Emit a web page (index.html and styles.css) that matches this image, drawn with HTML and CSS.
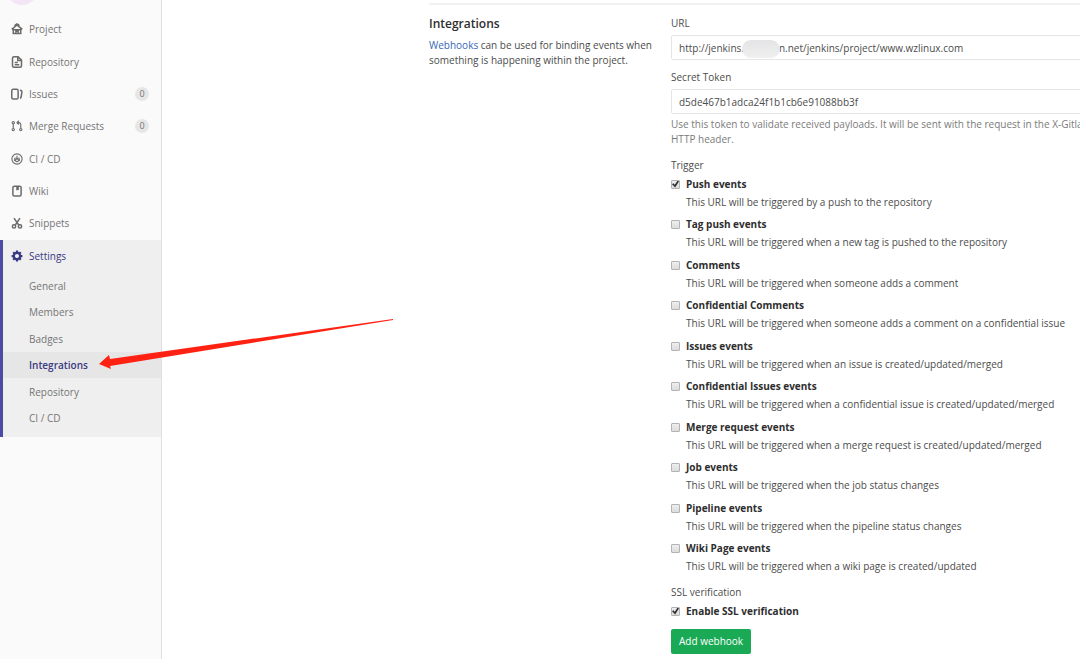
FILE: index.html
```html
<!DOCTYPE html>
<html lang="en">
<head>
	<meta charset="UTF-8">
	<meta name="viewport" content="width=device-width, initial-scale=1.0">
	<title>Integrations</title>
	<link rel="stylesheet" href="styles.css">
</head>
<body>

	<div class="page">

		<!-- Sidebar -->
		<nav class="sidebar">
			<div class="avatar"></div>
			<ul class="nav-list">
				<li><a href="#">
					<svg class="icon" viewBox="0 0 16 16"><path d="M1 8.500 8 2.500l7 6M3 7.500V14h10V7.500M3 9h10M6.500 14v-3h3v3M5.500 4.500V2.800L8 1.200l2.500 1.600v1.700"/></svg>
					<span>Project</span></a></li>
				<li><a href="#">
					<svg class="icon" viewBox="0 0 16 16"><path d="M4 1h5.500L14 5.500V13a2 2 0 0 1-2 2H4a2 2 0 0 1-2-2V3a2 2 0 0 1 2-2zM9 1.500V6h4.500M5 8.500h4M5 11.500h6"/></svg>
					<span>Repository</span></a></li>
				<li><a href="#">
					<svg class="icon" viewBox="0 0 16 16"><rect x="1" y="1.500" width="8.500" height="13" rx="2"/><path d="M12 3c2 .3 2.800 1 2.500 2.800L13.500 12c-.2 1-.7 1.500-1.500 1.700"/></svg>
					<span>Issues</span><span class="badge">0</span></a></li>
				<li><a href="#">
					<svg class="icon thin" viewBox="0 0 16 16"><path d="M3 5v6M13 11V6a2.500 2.500 0 0 0-2.500-2.500H8M10.500 1 8 3.500 10.500 6"/><circle cx="3" cy="3.500" r="1.500"/><circle cx="3" cy="12.800" r="1.500"/><circle cx="13" cy="12.800" r="1.500"/></svg>
					<span>Merge Requests</span><span class="badge">0</span></a></li>
				<li><a href="#">
					<svg class="icon thin" viewBox="0 0 16 16"><circle cx="8" cy="8" r="6.800"/><circle cx="8" cy="9.500" r="2"/><path d="M8 3.500V9M5.500 6 4.500 10.500M10.500 6l1 4.500"/></svg>
					<span>CI / CD</span></a></li>
				<li><a href="#">
					<svg class="icon" viewBox="0 0 16 16"><rect x="2.500" y="1.500" width="11" height="13" rx="2"/><path d="M8 2v5M9.500 2v4.500"/></svg>
					<span>Wiki</span></a></li>
				<li><a href="#">
					<svg class="icon" viewBox="0 0 16 16"><path d="M4 1.500 10.500 11M12 1.500 5.500 11"/><circle cx="4" cy="12.500" r="2.200"/><circle cx="12" cy="12.500" r="2.200"/></svg>
					<span>Snippets</span></a></li>
				<li class="active"><a href="#">
					<svg class="icon gear" viewBox="0 0 16 16"><circle cx="8" cy="8" r="4.200"/><path d="M8 .8v3M8 12.200v3M.8 8h3M12.200 8h3M2.900 2.900l2.200 2.200M10.900 10.900l2.200 2.200M2.900 13.100l2.200-2.200M10.900 5.100l2.200-2.200"/></svg>
					<span>Settings</span></a>
					<ul class="sub-list">
						<li><a href="#">General</a></li>
						<li><a href="#">Members</a></li>
						<li><a href="#">Badges</a></li>
						<li class="current"><a href="#">Integrations</a></li>
						<li><a href="#">Repository</a></li>
						<li><a href="#">CI / CD</a></li>
					</ul>
				</li>
			</ul>
		</nav>

		<!-- Content -->
		<main class="content">
			<div class="settings-row">
				<section class="intro">
					<h1>Integrations</h1>
					<p><a href="#">Webhooks</a> can be used for binding events when something is happening within the project.</p>
				</section>

				<form class="hook-form">
					<label class="field-label" for="url">URL</label>
					<div class="url-field">
						<input type="text" id="url" value="http://jenkins.&emsp;&emsp;&emsp;&ensp;n.net/jenkins/project/www.wzlinux.com">
						<span class="mask"></span>
					</div>

					<label class="field-label" for="token">Secret Token</label>
					<input type="text" id="token" value="d5de467b1adca24f1b1cb6e91088bb3f">
					<p class="help">Use this token to validate received payloads. It will be sent with the request in the X-Gitlab<br>HTTP header.</p>

					<h2>Trigger</h2>
					<ul class="triggers">
						<li><input type="checkbox" id="push" checked><label for="push">Push events</label>
							<p>This URL will be triggered by a push to the repository</p></li>
						<li><input type="checkbox" id="tag"><label for="tag">Tag push events</label>
							<p>This URL will be triggered when a new tag is pushed to the repository</p></li>
						<li><input type="checkbox" id="comments"><label for="comments">Comments</label>
							<p>This URL will be triggered when someone adds a comment</p></li>
						<li><input type="checkbox" id="conf-comments"><label for="conf-comments">Confidential Comments</label>
							<p>This URL will be triggered when someone adds a comment on a confidential issue</p></li>
						<li><input type="checkbox" id="issues"><label for="issues">Issues events</label>
							<p>This URL will be triggered when an issue is created/updated/merged</p></li>
						<li><input type="checkbox" id="conf-issues"><label for="conf-issues">Confidential Issues events</label>
							<p>This URL will be triggered when a confidential issue is created/updated/merged</p></li>
						<li><input type="checkbox" id="merge"><label for="merge">Merge request events</label>
							<p>This URL will be triggered when a merge request is created/updated/merged</p></li>
						<li><input type="checkbox" id="job"><label for="job">Job events</label>
							<p>This URL will be triggered when the job status changes</p></li>
						<li><input type="checkbox" id="pipeline"><label for="pipeline">Pipeline events</label>
							<p>This URL will be triggered when the pipeline status changes</p></li>
						<li><input type="checkbox" id="wiki"><label for="wiki">Wiki Page events</label>
							<p>This URL will be triggered when a wiki page is created/updated</p></li>
					</ul>

					<h2>SSL verification</h2>
					<div class="ssl"><input type="checkbox" id="ssl" checked><label for="ssl">Enable SSL verification</label></div>

					<button type="button">Add webhook</button>
				</form>
			</div>
		</main>

	</div>

	<!-- Arrow pointing at the Integrations item -->
	<svg class="arrow" viewBox="0 0 296 52"><path d="M1 47 11 38 12 42 295 2v1L12 49 13 52z"/></svg>

</body>
</html>
```
FILE: styles.css
```css
* {
	box-sizing: border-box;
}
body {
	margin: 0;
	font-family: "Open Sans", "Noto Sans", sans-serif;
	font-size: 10px;
	line-height: 15px;
	color: #4c4c4c;
	background-color: #fff;
	overflow: hidden;
}
ul {
	list-style: none;
	margin: 0;
	padding: 0;
}
p, h1, h2 {
	margin: 0;
}
a {
	text-decoration: none;
}
.page {
	display: flex;
	min-height: 100vh;
}

/* Sidebar */
.sidebar {
	flex: 0 0 162px;
	background-color: #fafafa;
	border-right: 1px solid #e0e0e0;
}
.avatar {
	width: 32px;
	height: 32px;
	margin: -27px 0 8px 6px;
	border-radius: 50%;
	background-color: #f3e5f5;
}
.nav-list a {
	display: flex;
	align-items: center;
	height: 32px;
	padding: 0 12px 0 11px;
	color: #757575;
}
.nav-list > li:nth-child(3n+1) {
	margin-bottom: 1px;
}
.icon {
	width: 12px;
	height: 12px;
	margin-right: 6px;
	fill: none;
	stroke: #6b6b6b;
	stroke-width: 2;
}
.thin {
	stroke-width: 1.5;
}
.badge {
	margin-left: auto;
	width: 14px;
	line-height: 14px;
	border-radius: 7px;
	background-color: #e6e6e6;
	font-size: 9px;
	text-align: center;
}
.nav-list .active {
	padding-bottom: 6px;
	border-left: 3px solid #4b4ba3;
	background-color: #efefef;
}
.active > a {
	padding-left: 8px;
	color: #393982;
	font-weight: 500;
}
.gear {
	stroke: #393982;
	stroke-width: 3;
}
.sub-list a {
	height: 26px;
	padding-left: 26px;
}
.sub-list li:nth-child(odd) {
	padding-top: 1px;
}
.sub-list .current {
	background-color: #e6e6e6;
}
.current a {
	color: #393982;
	font-weight: 600;
}

/* Content */
.content {
	flex: 1;
	min-width: 0;
	padding: 3px 0 0 267px;
}
.settings-row {
	display: grid;
	grid-template-columns: 226px 1fr;
	column-gap: 16px;
	margin-right: -40px;
	padding-top: 11px;
	border-top: 2px solid #f2f2f2;
}
h1 {
	margin-bottom: 6px;
	font-size: 12px;
	line-height: 16px;
	font-weight: 600;
	color: #2e2e2e;
}
.intro a {
	color: #3568b8;
}
.field-label {
	display: block;
	margin-bottom: 4px;
	font-weight: 500;
}
input[type="text"] {
	display: block;
	width: 100%;
	height: 25px;
	margin-bottom: 10px;
	padding: 0 7px;
	border: 1px solid #e5e5e5;
	border-radius: 2px;
	font: inherit;
	color: inherit;
}
.url-field {
	position: relative;
}
.mask {
	position: absolute;
	top: 5px;
	left: 71px;
	width: 38px;
	height: 18px;
	border-radius: 9px;
	background: linear-gradient(#e4e4e6, #f0f0f0);
}
#token {
	margin-bottom: 3px;
}
.help {
	margin-bottom: 11px;
	color: #7b7b7b;
}
h2 {
	font-size: 10px;
	line-height: 15px;
	font-weight: 400;
	margin-bottom: 2px;
}
.triggers {
	margin-bottom: 5px;
}
.triggers li, .ssl {
	display: grid;
	grid-template-columns: 9px 1fr;
	column-gap: 6px;
	align-items: center;
	line-height: 18px;
	padding-bottom: 4px;
}
.triggers li:nth-child(even) {
	padding-bottom: 5px;
}
.triggers p {
	grid-column: 2;
}
.triggers label, .ssl label {
	font-weight: 700;
	color: #2e2e2e;
}
input[type="checkbox"] {
	appearance: none;
	display: grid;
	place-items: center;
	width: 9px;
	height: 9px;
	margin: 0;
	border: 1px solid #b3b3b3;
	border-radius: 1px;
	background: linear-gradient(#eee, #dcdcdc);
}
input[type="checkbox"]:checked::after {
	content: "";
	width: 7px;
	height: 7px;
	background-color: #333;
	clip-path: polygon(0 55%, 20% 40%, 40% 60%, 80% 0, 100% 15%, 45% 100%);
}
button {
	margin-top: 5px;
	padding: 5px 8px;
	border: 0;
	border-radius: 2px;
	background-color: #1aaa55;
	color: #fff;
	font: inherit;
	font-weight: 500;
	cursor: pointer;
}

.arrow {
	position: absolute;
	top: 317px;
	left: 98px;
	width: 296px;
	height: 52px;
	fill: #ff2213;
	pointer-events: none;
}
```
